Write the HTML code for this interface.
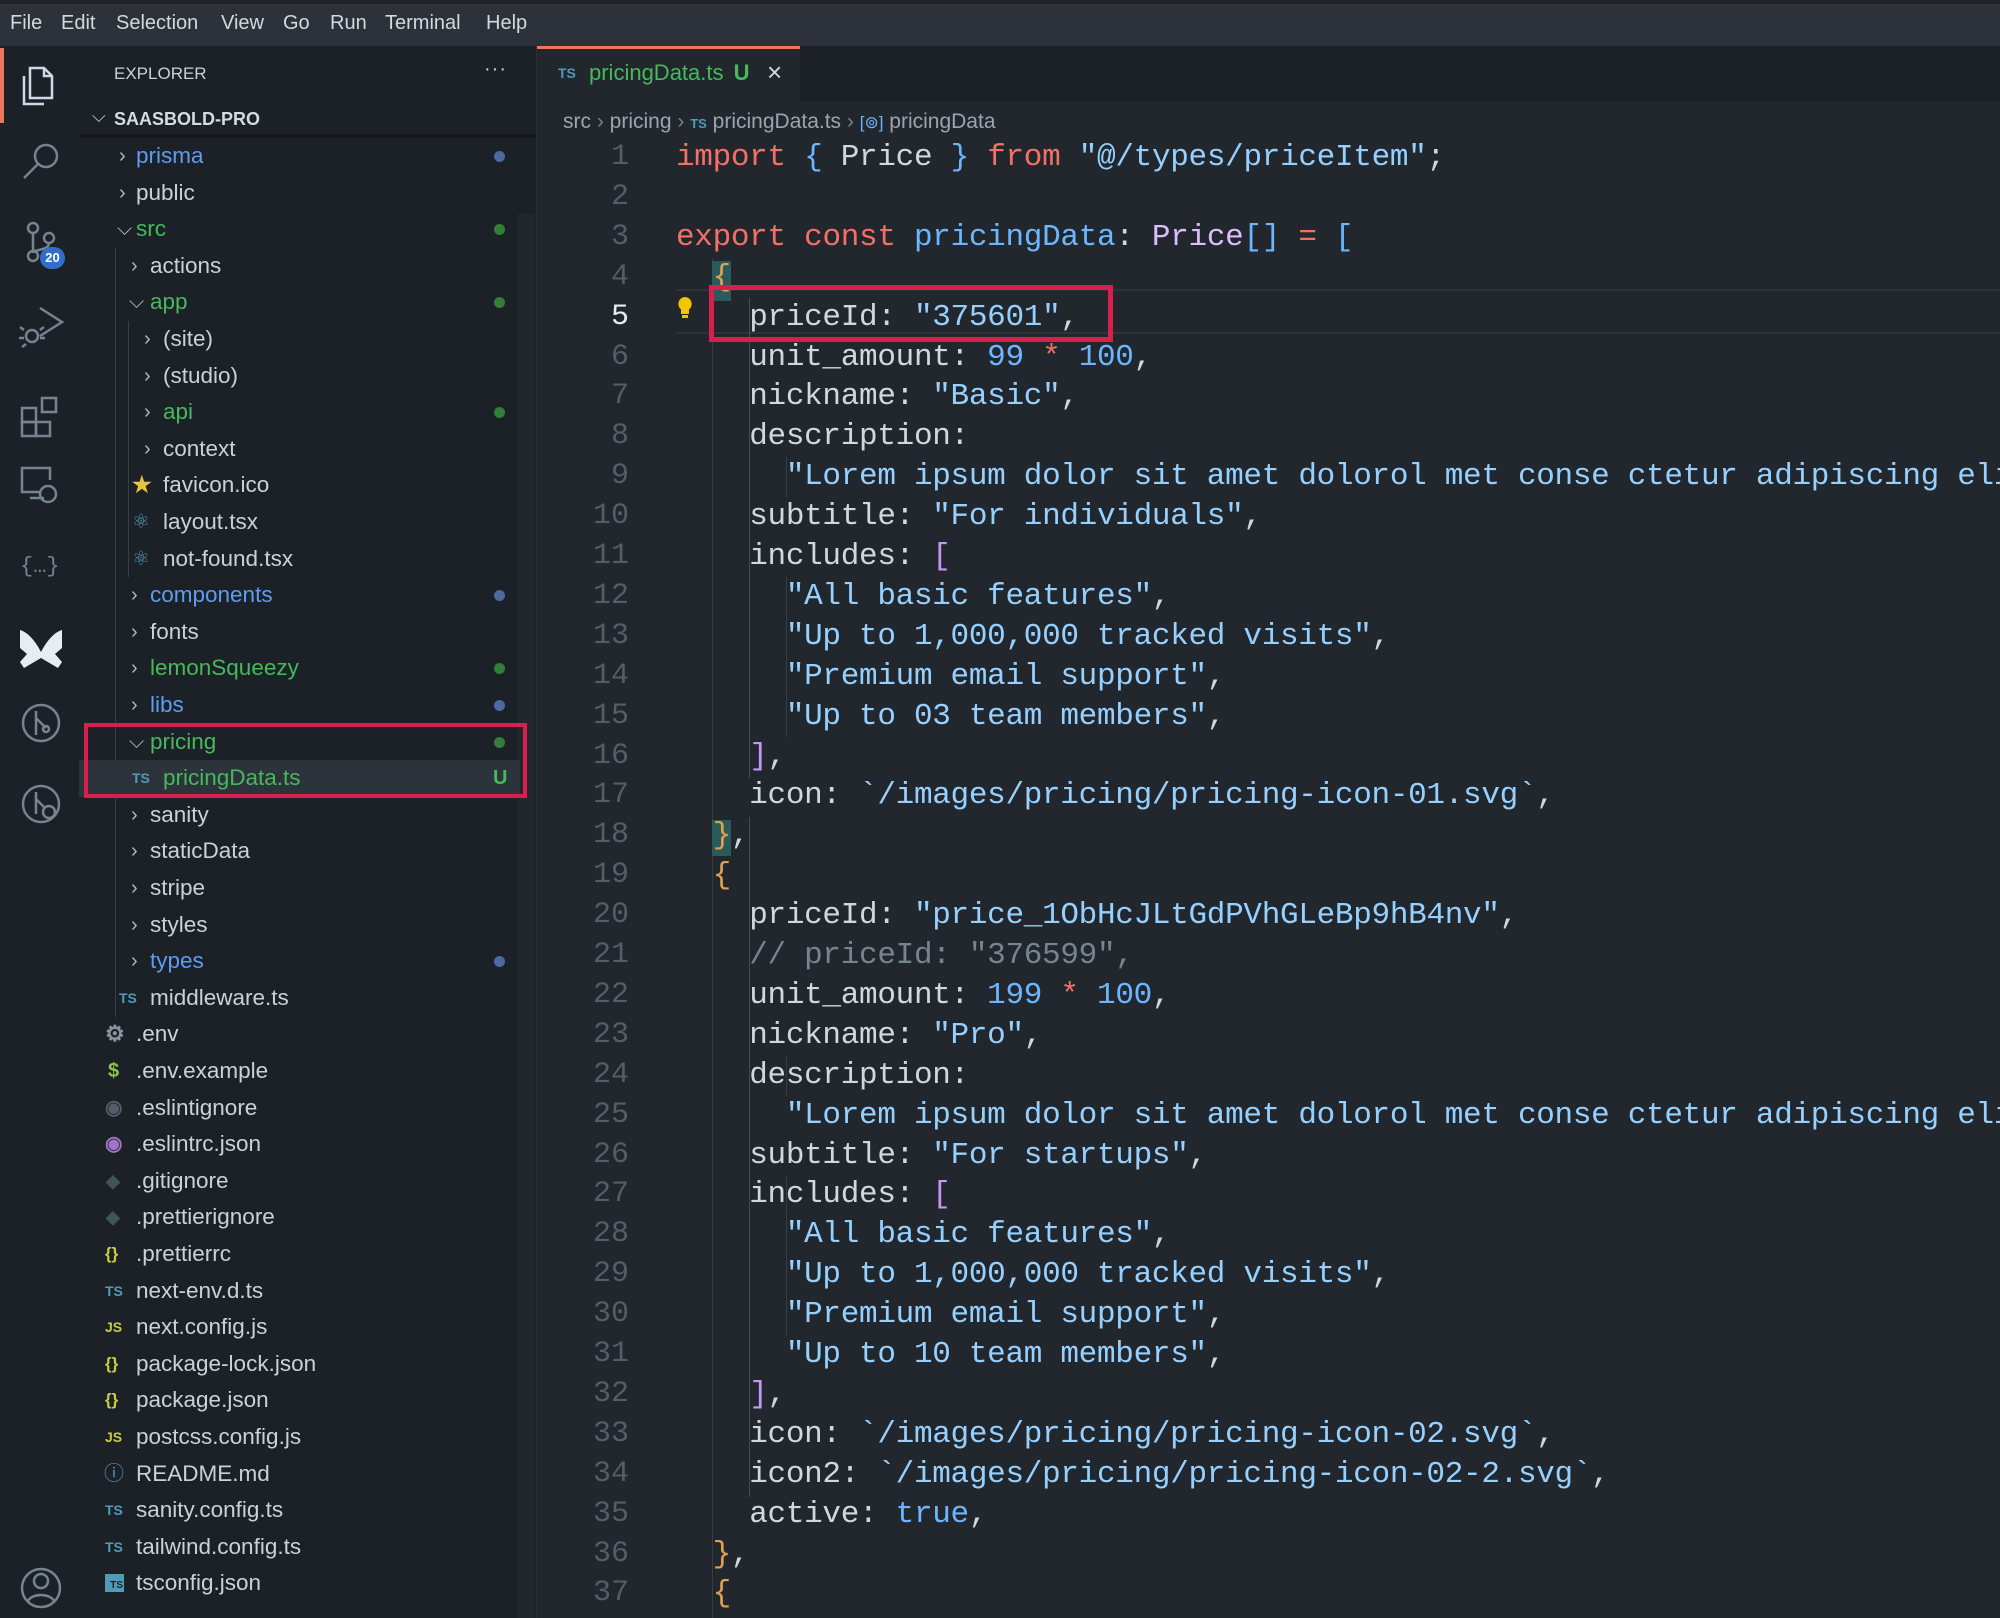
<!DOCTYPE html>
<html><head><meta charset="utf-8"><style>
*{margin:0;padding:0;box-sizing:border-box}
body{width:2000px;height:1618px;overflow:hidden;background:#22272e;font-family:"Liberation Sans",sans-serif;position:relative}
.abs{position:absolute}
#menu{left:0;top:0;width:2000px;height:46px;background:#2d3139;border-top:4px solid #1f2228}
#menu span{position:absolute;top:8px;font-size:20px;color:#d4d9df}
#act{left:0;top:46px;width:79px;height:1572px;background:#1c2128}
#side{left:79px;top:46px;width:458px;height:1572px;background:#1c2128;border-right:1px solid #2a3038}
.row{position:absolute;left:79px;width:441px;height:36.6px;line-height:36.6px;font-size:22.5px;color:#c9d1d9;white-space:nowrap}
.row .ch{position:absolute;top:0;font-size:20px;color:#adbac7}
.g{color:#46b95a!important}.b{color:#5f9cf0!important}
.dot{position:absolute;left:415px;top:13px;width:11px;height:11px;border-radius:50%}
.dg{background:#347d39}.db{background:#4a6aa0}
.ic{position:absolute;top:0;font-weight:bold;font-size:14px}
.guide{position:absolute;width:1px;background:#373e47}
#tabs{left:537px;top:46px;width:1463px;height:56px;background:#1c2128}
#tab{left:537px;top:46px;width:263px;height:56px;background:#22272e;border-top:3px solid #ec775c}
#code{left:537px;top:138px;width:1463px;height:1480px;overflow:hidden}
.ln{position:absolute;left:0;width:92px;text-align:right;font-family:"Liberation Mono",monospace;font-size:30px;color:#545d68;height:39.9px;line-height:39.9px}
.cl{position:absolute;left:139px;font-family:"Liberation Mono",monospace;font-size:31px;letter-spacing:-0.3px;white-space:pre;color:#d0d7de;height:39.9px;line-height:39.9px}
.k{color:#f47067}.s{color:#96d0ff}.n{color:#6cb6ff}.t{color:#dcbdfb}.c{color:#768390}.o{color:#e0a050}.pu{color:#c597f0}.bl{color:#6cb6ff}
</style></head><body>
<div id="menu" class="abs">
<span style="left:10px">File</span><span style="left:61px">Edit</span><span style="left:116px">Selection</span><span style="left:221px">View</span><span style="left:283px">Go</span><span style="left:330px">Run</span><span style="left:385px">Terminal</span><span style="left:486px">Help</span>
</div>
<div id="act" class="abs"></div>
<div class="abs" style="left:0;top:48px;width:4px;height:75px;background:#ec775c"></div>
<svg class="abs" style="left:0;top:46px" width="79" height="1572" fill="none" stroke="#768390" stroke-width="2.5">
<g stroke="#cdd9e5"><path d="M30 22h14l8 8v22H30z"/><path d="M24 30v28h20"/><path d="M44 22v8h8"/></g>
<circle cx="46" cy="110" r="11"/><path d="M38 118l-14 14"/>
<circle cx="33" cy="182" r="5"/><circle cx="33" cy="210" r="5"/><circle cx="49" cy="192" r="5"/><path d="M33 187v18M49 197c0 8-16 6-16 10"/>
<path d="M40 262l22 14-22 14" /><circle cx="32" cy="290" r="6"/><path d="M24 284l-4-3M24 292h-5M26 298l-4 3M40 284l4-3M40 292h5"/>
<rect x="22" y="362" width="14" height="14"/><rect x="22" y="376" width="14" height="14"/><rect x="36" y="376" width="14" height="14"/><rect x="42" y="352" width="14" height="14"/>
<path d="M50 434V422H22v24h18M30 452h14"/><circle cx="48" cy="448" r="8"/>
<text x="20" y="526" font-size="22" fill="#768390" stroke="none" font-family="Liberation Mono">{…}</text>
<path d="M20 584c8 2 16 12 21 22 5-10 13-20 21-22v18l-7 6 7 8-4 6-17-10-17 10-4-6 7-8-7-6z" fill="#e6edf3" stroke="none"/>
<circle cx="41" cy="677" r="18"/><path d="M36 665v24M36 672l10 10"/><circle cx="46" cy="683" r="3"/>
<circle cx="41" cy="758" r="18"/><path d="M36 746v22M36 753l8 8"/><circle cx="49" cy="766" r="6"/>
<circle cx="41" cy="1542" r="19"/><circle cx="41" cy="1535" r="7"/><path d="M28 1555c4-8 22-8 26 0"/>
</svg>
<div class="abs" style="left:40px;top:247px;width:25px;height:22px;border-radius:11px;background:#316dca;color:#fff;font-size:13px;font-weight:bold;text-align:center;line-height:22px">20</div>
<div id="side" class="abs"></div>
<div class="abs" style="left:518px;top:213px;width:17px;height:1405px;background:#22272e"></div>
<div class="abs" style="left:114px;top:64px;font-size:17px;color:#c9d1d9">EXPLORER</div>
<div class="abs" style="left:484px;top:58px;font-size:20px;color:#c9d1d9;letter-spacing:1px">···</div>
<div class="abs" style="left:92px;top:106px;font-size:18px;color:#c9d1d9">⌵</div>
<div class="abs" style="left:114px;top:109px;font-size:18px;font-weight:bold;color:#d5dbe1">SAASBOLD-PRO</div>
<div class="abs" style="left:79px;top:134px;width:456px;height:4px;background:#15191e"></div>
<div class="guide" style="left:115px;top:248px;height:769px"></div>
<div class="guide" style="left:128px;top:321px;height:256px"></div>
<div class="guide" style="left:128px;top:760px;height:37px"></div>
<div class="abs" style="left:79px;top:760px;width:441px;height:37px;background:#2d333b"></div>

<div class="row b" style="top:138px"><span class="ch" style="left:40px">›</span><span style="position:absolute;left:57px">prisma</span><i class="dot db"></i></div>
<div class="row" style="top:174.6px"><span class="ch" style="left:40px">›</span><span style="position:absolute;left:57px">public</span></div>
<div class="row g" style="top:211.2px"><span class="ch" style="left:38px">⌵</span><span style="position:absolute;left:57px">src</span><i class="dot dg"></i></div>
<div class="row" style="top:247.8px"><span class="ch" style="left:52px">›</span><span style="position:absolute;left:71px">actions</span></div>
<div class="row g" style="top:284.4px"><span class="ch" style="left:50px">⌵</span><span style="position:absolute;left:71px">app</span><i class="dot dg"></i></div>
<div class="row" style="top:321px"><span class="ch" style="left:65px">›</span><span style="position:absolute;left:84px">(site)</span></div>
<div class="row" style="top:357.6px"><span class="ch" style="left:65px">›</span><span style="position:absolute;left:84px">(studio)</span></div>
<div class="row g" style="top:394.2px"><span class="ch" style="left:65px">›</span><span style="position:absolute;left:84px">api</span><i class="dot dg"></i></div>
<div class="row" style="top:430.8px"><span class="ch" style="left:65px">›</span><span style="position:absolute;left:84px">context</span></div>
<div class="row" style="top:467.4px"><span class="ic" style="left:53px;color:#e8c340;font-size:22px">★</span><span style="position:absolute;left:84px">favicon.ico</span></div>
<div class="row" style="top:504px"><span class="ic" style="left:53px;color:#519aba;font-size:20px;font-weight:normal">⚛</span><span style="position:absolute;left:84px">layout.tsx</span></div>
<div class="row" style="top:540.6px"><span class="ic" style="left:53px;color:#519aba;font-size:20px;font-weight:normal">⚛</span><span style="position:absolute;left:84px">not-found.tsx</span></div>
<div class="row b" style="top:577.2px"><span class="ch" style="left:52px">›</span><span style="position:absolute;left:71px">components</span><i class="dot db"></i></div>
<div class="row" style="top:613.8px"><span class="ch" style="left:52px">›</span><span style="position:absolute;left:71px">fonts</span></div>
<div class="row g" style="top:650.4px"><span class="ch" style="left:52px">›</span><span style="position:absolute;left:71px">lemonSqueezy</span><i class="dot dg"></i></div>
<div class="row b" style="top:687px"><span class="ch" style="left:52px">›</span><span style="position:absolute;left:71px">libs</span><i class="dot db"></i></div>
<div class="row g" style="top:723.6px"><span class="ch" style="left:50px">⌵</span><span style="position:absolute;left:71px">pricing</span><i class="dot dg"></i></div>
<div class="row g" style="top:760.2px"><span class="ic" style="left:53px;color:#519aba">TS</span><span style="position:absolute;left:84px">pricingData.ts</span><span style="position:absolute;left:414px;font-weight:bold;font-size:20px">U</span></div>
<div class="row" style="top:796.8px"><span class="ch" style="left:52px">›</span><span style="position:absolute;left:71px">sanity</span></div>
<div class="row" style="top:833.4px"><span class="ch" style="left:52px">›</span><span style="position:absolute;left:71px">staticData</span></div>
<div class="row" style="top:870px"><span class="ch" style="left:52px">›</span><span style="position:absolute;left:71px">stripe</span></div>
<div class="row" style="top:906.6px"><span class="ch" style="left:52px">›</span><span style="position:absolute;left:71px">styles</span></div>
<div class="row b" style="top:943.2px"><span class="ch" style="left:52px">›</span><span style="position:absolute;left:71px">types</span><i class="dot db"></i></div>
<div class="row" style="top:979.8px"><span class="ic" style="left:40px;color:#519aba">TS</span><span style="position:absolute;left:71px">middleware.ts</span></div>
<div class="row" style="top:1016.4px"><span class="ic" style="left:26px;color:#8b949e;font-size:22px">⚙</span><span style="position:absolute;left:57px">.env</span></div>
<div class="row" style="top:1053px"><span class="ic" style="left:29px;color:#8dc149;font-size:20px">$</span><span style="position:absolute;left:57px">.env.example</span></div>
<div class="row" style="top:1089.6px"><span class="ic" style="left:26px;color:#545d68;font-size:20px">◉</span><span style="position:absolute;left:57px">.eslintignore</span></div>
<div class="row" style="top:1126.2px"><span class="ic" style="left:26px;color:#a074c4;font-size:20px">◉</span><span style="position:absolute;left:57px">.eslintrc.json</span></div>
<div class="row" style="top:1162.8px"><span class="ic" style="left:27px;color:#41535b;font-size:18px">◆</span><span style="position:absolute;left:57px">.gitignore</span></div>
<div class="row" style="top:1199.4px"><span class="ic" style="left:27px;color:#41535b;font-size:18px">◆</span><span style="position:absolute;left:57px">.prettierignore</span></div>
<div class="row" style="top:1236px"><span class="ic" style="left:26px;color:#cbcb41;font-size:17px">{}</span><span style="position:absolute;left:57px">.prettierrc</span></div>
<div class="row" style="top:1272.6px"><span class="ic" style="left:26px;color:#519aba">TS</span><span style="position:absolute;left:57px">next-env.d.ts</span></div>
<div class="row" style="top:1309.2px"><span class="ic" style="left:26px;color:#cbcb41">JS</span><span style="position:absolute;left:57px">next.config.js</span></div>
<div class="row" style="top:1345.8px"><span class="ic" style="left:26px;color:#cbcb41;font-size:17px">{}</span><span style="position:absolute;left:57px">package-lock.json</span></div>
<div class="row" style="top:1382.4px"><span class="ic" style="left:26px;color:#cbcb41;font-size:17px">{}</span><span style="position:absolute;left:57px">package.json</span></div>
<div class="row" style="top:1419px"><span class="ic" style="left:26px;color:#cbcb41">JS</span><span style="position:absolute;left:57px">postcss.config.js</span></div>
<div class="row" style="top:1455.6px"><span class="ic" style="left:25px;color:#519aba;font-size:20px;font-weight:normal">ⓘ</span><span style="position:absolute;left:57px">README.md</span></div>
<div class="row" style="top:1492.2px"><span class="ic" style="left:26px;color:#519aba">TS</span><span style="position:absolute;left:57px">sanity.config.ts</span></div>
<div class="row" style="top:1528.8px"><span class="ic" style="left:26px;color:#519aba">TS</span><span style="position:absolute;left:57px">tailwind.config.ts</span></div>
<div class="row" style="top:1565.4px"><span style="position:absolute;left:26px;top:9px;width:19px;height:18px;background:#519aba;color:#1c2128;font-size:10px;font-weight:bold;line-height:24px;text-align:right;padding-right:1px">TS</span><span style="position:absolute;left:57px">tsconfig.json</span></div>

<div class="abs" style="left:84px;top:723px;width:443px;height:75px;border:4px solid #d81f50"></div>

<div id="tabs" class="abs"></div>
<div id="tab" class="abs"></div>
<div class="abs" style="left:558px;top:65px;font-size:14px;font-weight:bold;color:#519aba">TS</div>
<div class="abs" style="left:589px;top:60px;font-size:22px;color:#46b95a">pricingData.ts <b style="font-weight:bold;margin-left:4px">U</b></div>
<div class="abs" style="left:767px;top:57px;font-size:26px;color:#d0d7de">×</div>
<div class="abs" style="left:563px;top:110px;font-size:21px;color:#9ba5af;white-space:nowrap">src <span style="color:#768390">›</span> pricing <span style="color:#768390">›</span> <b style="font-size:13px;color:#519aba">TS</b> pricingData.ts <span style="color:#768390">›</span> <span style="color:#6cb6ff;font-size:17px">[⊚]</span> pricingData</div>

<div id="code" class="abs">
<div class="abs" style="left:139px;top:151px;width:1330px;height:45px;border-top:2px solid #2d333b;border-bottom:2px solid #2d333b"></div>
<div class="guide" style="left:175px;top:120px;height:1360px"></div>
<div class="guide" style="left:212px;top:160px;height:480px;background:#444c56"></div>
<div class="guide" style="left:212px;top:679px;height:680px;background:#444c56"></div>
<div class="guide" style="left:249px;top:319px;height:40px"></div>
<div class="guide" style="left:249px;top:439px;height:160px"></div>
<div class="guide" style="left:249px;top:918px;height:40px"></div>
<div class="guide" style="left:249px;top:1038px;height:160px"></div>
<div class="abs" style="left:175px;top:123px;width:19px;height:40px;background:#2b5a5a"></div>
<div class="abs" style="left:175px;top:682px;width:19px;height:36px;background:#2b5a5a"></div>
<svg class="abs" style="left:140px;top:158px" width="16" height="26"><path d="M8 1a7 7 0 0 0-4 12.5V18h8v-4.5A7 7 0 0 0 8 1z" fill="#f2c500"/><rect x="5" y="19" width="6" height="3" fill="#f2c500"/></svg>

<div class="ln" style="top:0">1</div><div class="ln" style="top:39.9px">2</div><div class="ln" style="top:79.8px">3</div><div class="ln" style="top:119.7px">4</div><div class="ln" style="top:159.6px;color:#e6edf3">5</div><div class="ln" style="top:199.5px">6</div><div class="ln" style="top:239.4px">7</div><div class="ln" style="top:279.3px">8</div><div class="ln" style="top:319.2px">9</div><div class="ln" style="top:359.1px">10</div><div class="ln" style="top:399px">11</div><div class="ln" style="top:438.9px">12</div><div class="ln" style="top:478.8px">13</div><div class="ln" style="top:518.7px">14</div><div class="ln" style="top:558.6px">15</div><div class="ln" style="top:598.5px">16</div><div class="ln" style="top:638.4px">17</div><div class="ln" style="top:678.3px">18</div><div class="ln" style="top:718.2px">19</div><div class="ln" style="top:758.1px">20</div><div class="ln" style="top:798px">21</div><div class="ln" style="top:837.9px">22</div><div class="ln" style="top:877.8px">23</div><div class="ln" style="top:917.7px">24</div><div class="ln" style="top:957.6px">25</div><div class="ln" style="top:997.5px">26</div><div class="ln" style="top:1037.4px">27</div><div class="ln" style="top:1077.3px">28</div><div class="ln" style="top:1117.2px">29</div><div class="ln" style="top:1157.1px">30</div><div class="ln" style="top:1197px">31</div><div class="ln" style="top:1236.9px">32</div><div class="ln" style="top:1276.8px">33</div><div class="ln" style="top:1316.7px">34</div><div class="ln" style="top:1356.6px">35</div><div class="ln" style="top:1396.5px">36</div><div class="ln" style="top:1436.4px">37</div>

<div class="cl" style="top:0"><span class="k">import</span> <span class="bl">{</span> Price <span class="bl">}</span> <span class="k">from</span> <span class="s">"@/types/priceItem"</span>;</div>
<div class="cl" style="top:79.8px"><span class="k">export</span> <span class="k">const</span> <span class="n">pricingData</span>: <span class="t">Price</span><span class="bl">[]</span> <span class="k">=</span> <span class="bl">[</span></div>
<div class="cl" style="top:119.7px">  <span class="o">{</span></div>
<div class="cl" style="top:159.6px">    priceId: <span class="s">"375601"</span>,</div>
<div class="cl" style="top:199.5px">    unit_amount: <span class="n">99</span> <span class="k">*</span> <span class="n">100</span>,</div>
<div class="cl" style="top:239.4px">    nickname: <span class="s">"Basic"</span>,</div>
<div class="cl" style="top:279.3px">    description:</div>
<div class="cl" style="top:319.2px">      <span class="s">"Lorem ipsum dolor sit amet dolorol met conse ctetur adipiscing elit."</span>,</div>
<div class="cl" style="top:359.1px">    subtitle: <span class="s">"For individuals"</span>,</div>
<div class="cl" style="top:399px">    includes: <span class="pu">[</span></div>
<div class="cl" style="top:438.9px">      <span class="s">"All basic features"</span>,</div>
<div class="cl" style="top:478.8px">      <span class="s">"Up to 1,000,000 tracked visits"</span>,</div>
<div class="cl" style="top:518.7px">      <span class="s">"Premium email support"</span>,</div>
<div class="cl" style="top:558.6px">      <span class="s">"Up to 03 team members"</span>,</div>
<div class="cl" style="top:598.5px">    <span class="pu">]</span>,</div>
<div class="cl" style="top:638.4px">    icon: <span class="s">`/images/pricing/pricing-icon-01.svg`</span>,</div>
<div class="cl" style="top:678.3px">  <span class="o">}</span>,</div>
<div class="cl" style="top:718.2px">  <span class="o">{</span></div>
<div class="cl" style="top:758.1px">    priceId: <span class="s">"price_1ObHcJLtGdPVhGLeBp9hB4nv"</span>,</div>
<div class="cl c" style="top:798px">    // priceId: "376599",</div>
<div class="cl" style="top:837.9px">    unit_amount: <span class="n">199</span> <span class="k">*</span> <span class="n">100</span>,</div>
<div class="cl" style="top:877.8px">    nickname: <span class="s">"Pro"</span>,</div>
<div class="cl" style="top:917.7px">    description:</div>
<div class="cl" style="top:957.6px">      <span class="s">"Lorem ipsum dolor sit amet dolorol met conse ctetur adipiscing elit."</span>,</div>
<div class="cl" style="top:997.5px">    subtitle: <span class="s">"For startups"</span>,</div>
<div class="cl" style="top:1037.4px">    includes: <span class="pu">[</span></div>
<div class="cl" style="top:1077.3px">      <span class="s">"All basic features"</span>,</div>
<div class="cl" style="top:1117.2px">      <span class="s">"Up to 1,000,000 tracked visits"</span>,</div>
<div class="cl" style="top:1157.1px">      <span class="s">"Premium email support"</span>,</div>
<div class="cl" style="top:1197px">      <span class="s">"Up to 10 team members"</span>,</div>
<div class="cl" style="top:1236.9px">    <span class="pu">]</span>,</div>
<div class="cl" style="top:1276.8px">    icon: <span class="s">`/images/pricing/pricing-icon-02.svg`</span>,</div>
<div class="cl" style="top:1316.7px">    icon2: <span class="s">`/images/pricing/pricing-icon-02-2.svg`</span>,</div>
<div class="cl" style="top:1356.6px">    active: <span class="n">true</span>,</div>
<div class="cl" style="top:1396.5px">  <span class="o">}</span>,</div>
<div class="cl" style="top:1436.4px">  <span class="o">{</span></div>

<div class="abs" style="left:172px;top:147px;width:404px;height:57px;border:5px solid #d81f50"></div>
</div>
</body></html>
